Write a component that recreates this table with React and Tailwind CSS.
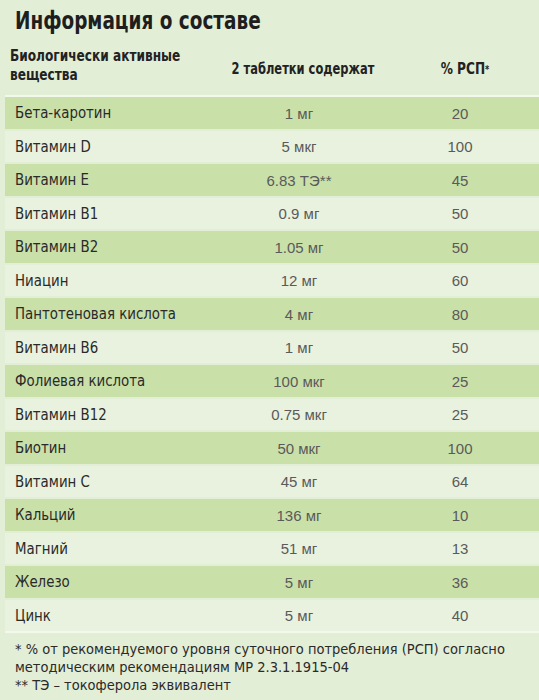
const rows = [
  ["Бета-каротин", "1 мг", "20"],
  ["Витамин D", "5 мкг", "100"],
  ["Витамин E", "6.83 ТЭ**", "45"],
  ["Витамин B1", "0.9 мг", "50"],
  ["Витамин B2", "1.05 мг", "50"],
  ["Ниацин", "12 мг", "60"],
  ["Пантотеновая кислота", "4 мг", "80"],
  ["Витамин B6", "1 мг", "50"],
  ["Фолиевая кислота", "100 мкг", "25"],
  ["Витамин B12", "0.75 мкг", "25"],
  ["Биотин", "50 мкг", "100"],
  ["Витамин C", "45 мг", "64"],
  ["Кальций", "136 мг", "10"],
  ["Магний", "51 мг", "13"],
  ["Железо", "5 мг", "36"],
  ["Цинк", "5 мг", "40"],
];

export default function App() {
  return (
    <div className="w-[539px] h-[700px] bg-[#e3eed6] overflow-hidden font-['DejaVu_Sans_Condensed',sans-serif]">
      <div className="pl-[15px] pt-[4px] h-[44px] text-[25px] font-bold text-[#1e1e1e] leading-[34px] whitespace-nowrap">
        <span className="inline-block origin-left scale-x-[0.82]">Информация о составе</span>
      </div>
      <div className="grid grid-cols-[200px_186px_148px] items-center h-[50px] pl-[10px] text-[15px] font-bold text-[#222] leading-[19px] whitespace-nowrap">
        <div className="-mt-[6px]">
          <span className="inline-block origin-left scale-x-[0.9]">
            Биологически активные<br />вещества
          </span>
        </div>
        <div className="text-center">
          <span className="inline-block scale-x-[0.85]">2 таблетки содержат</span>
        </div>
        <div className="text-center pr-[10px]">
          <span className="inline-block scale-x-[0.9]">% РСП<sup className="text-[10px] relative -top-[1px]">*</sup></span>
        </div>
      </div>
      <div className="flex flex-col gap-[2px] ml-[5px] mt-[1px] border-t-2 border-[#f3f8ec]">
        {rows.map((r, i) => (
          <div
            key={i}
            className={`grid grid-cols-[200px_186px_148px] items-center h-[31.5px] ${i % 2 === 0 ? "bg-[#c9e0a9]" : "bg-[#e9f2df]"}`}
          >
            <div className="pl-[10px] pt-[2px] text-[16.5px] text-[#2a2a2a] whitespace-nowrap">
              <span className="inline-block origin-left scale-x-[0.9]">{r[0]}</span>
            </div>
            <div className="text-center pt-[2px] pl-[2px] font-['Liberation_Sans',sans-serif] text-[15px] text-[#5a5a5a]">{r[1]}</div>
            <div className="text-center pt-[2px] pr-[10px] font-['Liberation_Sans',sans-serif] text-[15px] text-[#5a5a5a]">{r[2]}</div>
          </div>
        ))}
      </div>
      <div className="border-t-2 border-[#f3f8ec] ml-[5px]" />
      <div className="pl-[15px] pt-[7px] text-[14.5px] leading-[18px] text-[#2a2a2a]">
        <div>* % от рекомендуемого уровня суточного потребления (РСП) согласно</div>
        <div>методическим рекомендациям МР 2.3.1.1915-04</div>
        <div>** ТЭ – токоферола эквивалент</div>
      </div>
    </div>
  );
}
